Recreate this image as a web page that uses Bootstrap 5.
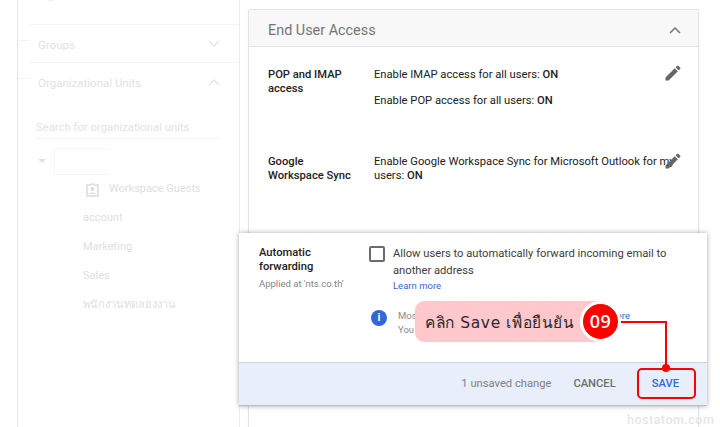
<!DOCTYPE html>
<html lang="en">
<head>
<meta charset="UTF-8">
<meta name="viewport" content="width=device-width, initial-scale=1">
<title>End User Access</title>
<link href="https://cdn.jsdelivr.net/npm/bootstrap@5.3.0/dist/css/bootstrap.min.css" rel="stylesheet">
<script src="https://cdn.jsdelivr.net/npm/bootstrap@5.3.0/dist/js/bootstrap.bundle.min.js"></script>
<style>
html, body { height: 427px; overflow: hidden; }
body { font-family: Roboto, "Liberation Sans", sans-serif; font-size: 11px; background: #fff; color: #212121; position: relative; }
.page-wrap { height: 427px; padding-left: 17px; }

/* sidebar, faded out behind the dialog */
.side-panel { width: 223px; height: 427px; flex: none; border-left: 1px solid #e6e6e6; border-right: 1px solid #ececec; color: #e0e0e0; position: relative; }
.side-head { height: 38px; margin-left: 12px; padding: 1px 19px 0 8px; border-top: 1px solid #f4f4f4; font-size: 11.5px; color: #e2e2e2; position: relative; }
.side-head span { margin-top: 4px; }
.side-head::before { content: ""; position: absolute; left: -12px; top: 15px; width: 12px; border-top: 1px solid #f4f4f4; }
.side-top { height: 24px; }
.side-arc { position: absolute; left: 26px; top: -10px; width: 14px; height: 11px; border-radius: 50%; border: 1px solid #eee; }
.side-search { margin: 20px 20px 0 18px; height: 19px; border-bottom: 1px solid #f4f4f4; font-size: 11.300px; line-height: 15px; color: #e3e3e3; }
.tree-root { height: 28px; margin: 8px 0 0 20px; gap: 8px; }
.tree-caret { width: 0; height: 0; border: 4px solid transparent; border-top: 4px solid #e2e2e2; border-bottom: 0; }
.tree-box { width: 56px; height: 27px; border: 1px solid #f6f6f6; border-right: 0; }
.tree-item { height: 29px; padding-left: 65px; font-size: 11px; color: #e0e0e0; }
.tree-item.guests { padding-left: 68px; gap: 10px; }

/* main card */
.main-area { padding: 9px 23px 0 8px; flex: 1; }
.access-card { border: 1px solid #e4e4e4; border-radius: 2px; height: 420px; box-shadow: 0 1px 2px rgba(0,0,0,.06); }
.access-head { height: 37px; background: #f8f8f8; border-bottom: 1px solid #e2e2e2; padding: 4px 17px 0 19px; font-size: 14.400px; color: #757575; }
.access-head span { margin-top: 2px; }
.access-row { padding: 0 19px; }
.access-label { width: 90px; margin-right: 16px; flex: none; font-weight: 500; font-size: 11.200px; line-height: 14px; color: #212121; }
.access-text { line-height: 14px; font-size: 11.200px; color: #212121; width: 305px; flex: none; }
.access-text b { font-weight: 500; }
.row-one { height: 88px; padding-top: 21px; }
.row-two { padding-top: 20px; }
.row-one p { margin-bottom: 12px; }
.pencil-btn { position: absolute; left: 663px; margin-top: -4px; }
.row-one .pencil-btn { margin-top: -5px; }

/* dialog laid over the card */
.save-dialog { position: absolute; left: 239px; top: 233px; width: 468px; height: 173px; background: #fff; box-shadow: 0 0 5px rgba(0,0,0,.35); }
.dialog-body { height: 129px; padding: 12px 0 0 20px; }
.dialog-label { width: 92px; margin-right: 18px; margin-top: 1px; flex: none; font-weight: 500; font-size: 11.200px; line-height: 14px; }
.dialog-label small { display: block; font-size: 9.500px; font-weight: 400; color: #858585; margin-top: 3px; white-space: nowrap; }
.fake-check { width: 16px; height: 16px; border: 2px solid #6b6b6b; border-radius: 2px; flex: none; margin-top: 1px; }
.allow-text { font-size: 11.200px; line-height: 17px; color: #3c3c3c; margin-left: 8px; width: 300px; }
.learn-link { font-size: 9.500px; color: #3367d6; text-decoration: none; line-height: 14px; display: block; }
.info-line { margin: 16px 0 0 2px; gap: 11px; font-size: 9.500px; color: #8a8a8a; line-height: 14px; }
.info-dot { width: 16px; height: 16px; border-radius: 50%; background: #3367d6; color: #fff; font-size: 11px; font-weight: 700; line-height: 16px; text-align: center; flex: none; margin-top: 1px; }
.info-more { position: absolute; left: 369px; top: 76px; font-size: 9.500px; color: #3367d6; }
.dialog-foot { height: 44px; background: #e8effa; border-top: 1px solid #ccd3de; border-bottom: 1px solid #bdbdbd; padding: 1px 28px 0 0; font-size: 11.200px; color: #808080; }
.foot-cancel { font-weight: 500; color: #6e6e6e; margin-left: 22px; }
.foot-save { font-weight: 500; color: #3367d6; margin-left: 36px; }

/* tutorial annotation */
.step-label { position: absolute; left: 415px; top: 301px; width: 190px; height: 41px; background: #fec8cd; border-radius: 9px 0 0 9px; font-family: "DejaVu Sans", "Noto Sans", sans-serif; font-size: 15.500px; letter-spacing: .6px; color: #2a2a2a; padding-left: 10px; line-height: 44px; white-space: nowrap; }
.step-num { position: absolute; left: 580px; top: 301px; width: 41px; height: 41px; border-radius: 50%; background: #f00; border: 3px solid #fff; color: #fff; font-weight: 600; font-size: 18px; letter-spacing: .5px; text-align: center; line-height: 35px; font-family: "Open Sans", sans-serif; }
.save-frame { position: absolute; left: 637px; top: 368px; width: 59px; height: 31px; border: 2px solid #f00; border-radius: 5px; }
.step-wire { position: absolute; left: 621px; top: 321px; width: 46px; height: 47px; border-top: 2px solid #f00; border-right: 2px solid #f00; }
.wire-dot { position: absolute; left: 662px; top: 364px; width: 8px; height: 8px; border-radius: 50%; background: #f00; }
.water-mark { position: absolute; left: 627px; top: 411px; font-size: 12.500px; font-weight: 500; letter-spacing: .5px; color: #e6e6e6; }
</style>
</head>
<body>
<div class="page-wrap d-flex">
  <aside class="side-panel">
    <span class="side-arc"></span>
    <div class="side-top"></div>
    <div class="side-head d-flex justify-content-between align-items-center">
      <span>Groups</span>
      <svg width="12" height="8" viewBox="0 0 12 8"><path d="M1 1l5 5 5-5" fill="none" stroke="#e6e6e6" stroke-width="1.5"/></svg>
    </div>
    <div class="side-head d-flex justify-content-between align-items-center">
      <span>Organizational Units</span>
      <svg width="12" height="8" viewBox="0 0 12 8"><path d="M1 7l5-5 5 5" fill="none" stroke="#e6e6e6" stroke-width="1.5"/></svg>
    </div>
    <div class="side-search">Search for organizational units</div>
    <div class="tree-root d-flex align-items-center">
      <span class="tree-caret"></span>
      <span class="tree-box"></span>
    </div>
    <div class="tree-item guests d-flex align-items-center">
      <svg width="13" height="14" viewBox="0 0 13 14"><path d="M1 2h3.500l1-1h2l1 1H12v11H1z" fill="none" stroke="#dcdcdc" stroke-width="1.500"/><circle cx="6.500" cy="6" r="2" fill="#dcdcdc"/><path d="M3 11c1-2 6-2 7 0z" fill="#dcdcdc"/></svg>
      <span>Workspace Guests</span>
    </div>
    <div class="tree-item d-flex align-items-center">account</div>
    <div class="tree-item d-flex align-items-center">Marketing</div>
    <div class="tree-item d-flex align-items-center">Sales</div>
    <div class="tree-item d-flex align-items-center">พนักงานทดลองงาน</div>
  </aside>

  <main class="main-area">
    <div class="access-card">
      <div class="access-head d-flex justify-content-between align-items-center">
        <span>End User Access</span>
        <svg width="12" height="8" viewBox="0 0 12 8"><path d="M1 7l5-5 5 5" fill="none" stroke="#757575" stroke-width="1.500"/></svg>
      </div>
      <div class="access-row row-one d-flex">
        <div class="access-label">POP and IMAP access</div>
        <div class="access-text">
          <p>Enable IMAP access for all users: <b>ON</b></p>
          <p>Enable POP access for all users: <b>ON</b></p>
        </div>
        <svg class="pencil-btn" width="20" height="20" viewBox="0 0 24 24"><path fill="#666" d="M3 17.250V21h3.750L17.810 9.940l-3.750-3.750L3 17.250zM20.710 7.040a1 1 0 0 0 0-1.410l-2.340-2.340a1 1 0 0 0-1.410 0l-1.830 1.830 3.750 3.750 1.830-1.830z"/></svg>
      </div>
      <div class="access-row row-two d-flex">
        <div class="access-label">Google Workspace Sync</div>
        <div class="access-text">Enable Google Workspace Sync for Microsoft Outlook for my users: <b>ON</b></div>
        <svg class="pencil-btn" width="20" height="20" viewBox="0 0 24 24"><path fill="#666" d="M3 17.250V21h3.750L17.810 9.940l-3.750-3.750L3 17.250zM20.710 7.040a1 1 0 0 0 0-1.410l-2.340-2.340a1 1 0 0 0-1.410 0l-1.830 1.830 3.750 3.750 1.830-1.830z"/></svg>
      </div>
    </div>
  </main>
</div>

<section class="save-dialog">
  <div class="dialog-body d-flex">
    <div class="dialog-label">Automatic forwarding<small>Applied at 'nts.co.th'</small></div>
    <div>
      <div class="d-flex">
        <span class="fake-check"></span>
        <div class="allow-text">
          Allow users to automatically forward incoming email to another address
          <a class="learn-link" href="#">Learn more</a>
        </div>
      </div>
      <div class="info-line d-flex">
        <span class="info-dot">i</span>
        <span>Most<br>You</span>
      </div>
    </div>
  </div>
  <a class="info-more text-decoration-none" href="#">more</a>
  <div class="dialog-foot d-flex align-items-center justify-content-end">
    <span>1 unsaved change</span>
    <span class="foot-cancel">CANCEL</span>
    <span class="foot-save">SAVE</span>
  </div>
</section>

<div class="step-label">คลิก Save เพื่อยืนยัน</div>
<div class="step-wire"></div>
<div class="step-num">09</div>
<div class="save-frame"></div>
<div class="wire-dot"></div>
<div class="water-mark">hostatom.com</div>
</body>
</html>
